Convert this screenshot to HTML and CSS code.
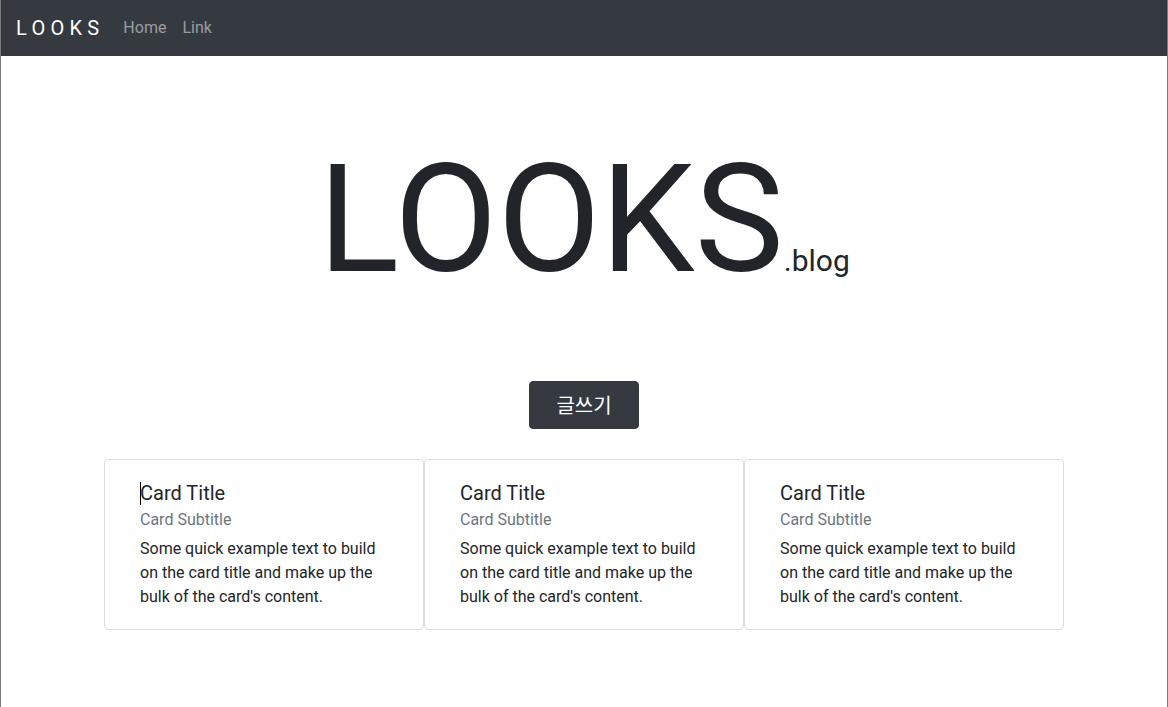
FILE: index.html
```html
<!DOCTYPE html>
<html lang="ko">
<head>
    <meta charset="UTF-8" />
    <title>LOOKS.blog</title>
    <link rel="stylesheet" href="styles.css">
</head>
<body>

<nav class="navbar">
    <a class="brand" href="#">LOOKS</a>
    <a class="nav-link" href="#">Home</a>
    <a class="nav-link" href="#">Link</a>
</nav>

<header class="hero">
    <h1 class="hero-title">LOOKS<small>.blog</small></h1>
    <button class="btn-write" type="button">글쓰기</button>
</header>

<section class="cards">
    <div class="card">
        <h5 class="card-title"><span class="caret"></span>Card Title</h5>
        <h6 class="card-subtitle">Card Subtitle</h6>
        <p class="card-text">Some quick example text to build on the card title and make up the bulk of the card's content.</p>
    </div>
    <div class="card">
        <h5 class="card-title">Card Title</h5>
        <h6 class="card-subtitle">Card Subtitle</h6>
        <p class="card-text">Some quick example text to build on the card title and make up the bulk of the card's content.</p>
    </div>
    <div class="card">
        <h5 class="card-title">Card Title</h5>
        <h6 class="card-subtitle">Card Subtitle</h6>
        <p class="card-text">Some quick example text to build on the card title and make up the bulk of the card's content.</p>
    </div>
</section>

</body>
</html>
```

FILE: styles.css
```css
* {
    box-sizing: border-box;
}
body {
    margin: 0;
    min-height: 707px;
    border-left: 1px solid #7b7b7b;
    border-right: 1px solid #7b7b7b;
    font-family: Roboto, "Noto Sans CJK KR", sans-serif;
    font-size: 16px;
    line-height: 1.5;
    color: #212529;
    background-color: #fff;
}
.navbar {
    display: flex;
    align-items: center;
    height: 56px;
    padding: 0 15px;
    background-color: #343a40;
}
.brand {
    font-size: 20px;
    line-height: 30px;
    letter-spacing: 5.25px;
    color: #fff;
    text-decoration: none;
    margin-right: 11px;
}
.nav-link {
    padding: 0 8px;
    line-height: 24px;
    color: rgba(255, 255, 255, .5);
    text-decoration: none;
}
.hero {
    padding-top: 74px;
    text-align: center;
}
.hero-title {
    margin: 0;
    font-size: 150px;
    font-weight: 400;
    line-height: 1.2;
}
.hero-title small {
    font-size: 30px;
}
.btn-write {
    margin-top: 71px;
    padding: 8px 26px;
    font-family: "Noto Sans CJK KR", sans-serif;
    font-size: 20px;
    line-height: 30px;
    color: #fff;
    background-color: #343a40;
    border: 1px solid #343a40;
    border-radius: 4px;
    cursor: pointer;
}
.cards {
    display: grid;
    grid-template-columns: repeat(3, 320px);
    justify-content: center;
    margin-top: 30px;
}
.card {
    padding: 21px 35px 20px;
    border: 1px solid rgba(0, 0, 0, .125);
    border-radius: 4px;
}
.card-title {
    margin: 0 0 3px;
    font-size: 20px;
    font-weight: 400;
    line-height: 24px;
}
.caret {
    display: inline-block;
    width: 1px;
    height: 23px;
    margin-right: -1px;
    vertical-align: -5px;
    background-color: #000;
}
.card-subtitle {
    margin: 0 0 5px;
    font-size: 16px;
    font-weight: 400;
    line-height: 24px;
    color: #6c757d;
}
.card-text {
    margin: 0;
}
```
